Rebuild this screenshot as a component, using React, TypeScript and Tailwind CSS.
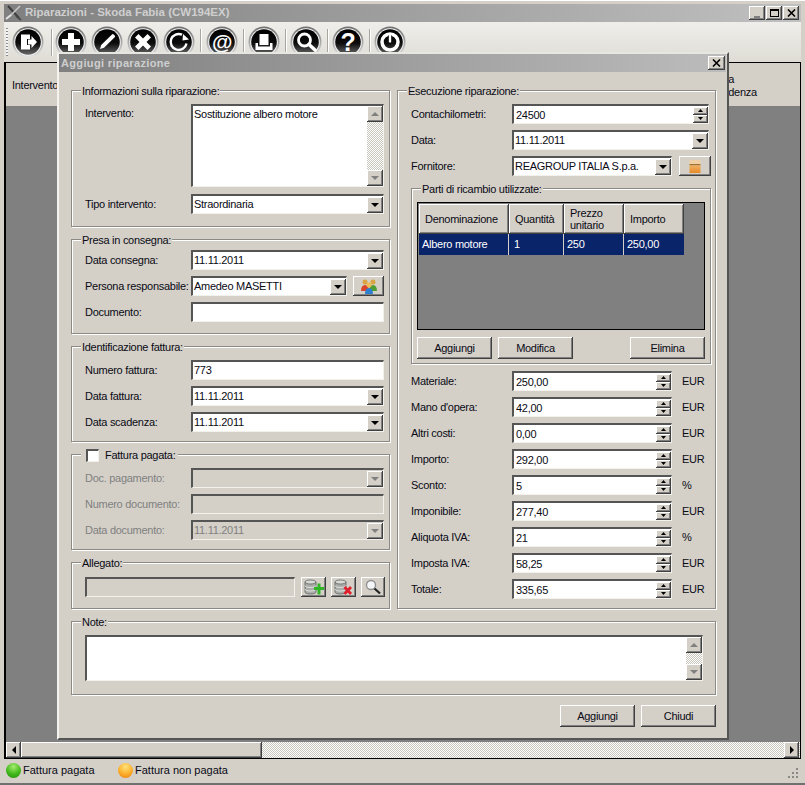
import React from 'react';

const face = 'bg-[#d4d0c8]';
const raised = 'bg-[#d4d0c8] shadow-[inset_-1px_-1px_0_#404040,inset_1px_1px_0_#fff,inset_-2px_-2px_0_#808080]';
const sunken = 'border-t-2 border-l-2 border-b border-r border-t-[#555555] border-l-[#555555] border-b-[#f2f1ec] border-r-[#f2f1ec]';
const dither = 'bg-[repeating-conic-gradient(#ffffff_0_25%,#c8c5bd_0_50%)] bg-[length:2px_2px]';

const Arrow = ({ dir = 'down', gray = false }: { dir?: 'up' | 'down' | 'left' | 'right'; gray?: boolean }) => {
    const points = { down: '0,0 8,0 4,4', up: '0,4 8,4 4,0', left: '4,0 4,8 0,4', right: '0,0 0,8 4,4' }[dir];
    const vertical = dir === 'up' || dir === 'down';
    return (
        <svg width={vertical ? 8 : 4} height={vertical ? 4 : 8} viewBox={vertical ? '0 0 8 4' : '0 0 4 8'}>
            <polygon points={points} fill={gray ? '#808080' : '#000'} />
        </svg>
    );
};

const SmallArrow = ({ up = false }: { up?: boolean }) => (
    <svg width="5" height="3" viewBox="0 0 5 3">
        <polygon points={up ? '0,3 5,3 2.5,0' : '0,0 5,0 2.5,3'} fill="#000" />
    </svg>
);

const GroupBox = ({ title, className, children }: { title: React.ReactNode; className: string; children: React.ReactNode }) => (
    <div className={`relative border border-[#8c8a84] shadow-[1px_1px_0_#fff,inset_1px_1px_0_#fff] ${className}`}>
        <div className="absolute -top-[6px] left-[9px] bg-[#d4d0c8] px-[1px] h-[13px] leading-[13px] flex items-center">{title}</div>
        {children}
    </div>
);

const Row = ({ label, width, disabled, children }: { label: string; width: string; disabled?: boolean; children: React.ReactNode }) => (
    <div className="flex items-center h-[20px]">
        <div className={`shrink-0 whitespace-nowrap ${width} ${disabled ? 'text-[#808080]' : ''}`}>{label}</div>
        {children}
    </div>
);

const TextBox = ({ value, className = '', disabled }: { value?: string; className?: string; disabled?: boolean }) => (
    <div className={`${sunken} h-[20px] flex items-center pl-[1px] ${disabled ? 'bg-[#d4d0c8] text-[#808080]' : 'bg-white'} ${className}`}>
        {value}
    </div>
);

const Combo = ({ value, className = 'flex-1', disabled }: { value?: string; className?: string; disabled?: boolean }) => (
    <div className={`${sunken} h-[20px] flex items-center justify-between ${disabled ? 'bg-[#d4d0c8] text-[#808080]' : 'bg-white'} ${className}`}>
        <span className="pl-[1px] whitespace-nowrap">{value}</span>
        <div className={`${raised} w-[16px] h-[16px] flex items-center justify-center`}>
            <Arrow gray={disabled} />
        </div>
    </div>
);

const Spin = ({ value, className = 'w-[160px]' }: { value: string; className?: string }) => (
    <div className={`${sunken} h-[20px] bg-white flex items-center justify-between ${className}`}>
        <span className="pl-[2px] pt-[1px]">{value}</span>
        <div className="flex flex-col w-[15px] h-[16px]">
            <div className={`${raised} flex-1 flex items-center justify-center`}><SmallArrow up /></div>
            <div className={`${raised} flex-1 flex items-center justify-center`}><SmallArrow /></div>
        </div>
    </div>
);

const VScroll = () => (
    <div className={`${dither} w-[16px] h-full flex flex-col justify-between shrink-0`}>
        <div className={`${raised} h-[16px] flex items-center justify-center`}><Arrow dir="up" gray /></div>
        <div className={`${raised} h-[16px] flex items-center justify-center`}><Arrow gray /></div>
    </div>
);

const PushButton = ({ children, className = '' }: { children: React.ReactNode; className?: string }) => (
    <div className={`${raised} flex items-center justify-center ${className}`}>{children}</div>
);

const ToolIcon = ({ children, id }: { children: React.ReactNode; id: string }) => (
    <svg width="32" height="32" viewBox="0 0 32 32" className="shrink-0">
        <defs>
            <linearGradient id={`ring${id}`} x1="0" y1="0" x2="0" y2="1">
                <stop offset="0" stopColor="#6f6f6f" />
                <stop offset="1" stopColor="#e2e2e2" />
            </linearGradient>
            <linearGradient id={`core${id}`} x1="0" y1="0" x2="0" y2="1">
                <stop offset="0" stopColor="#000" />
                <stop offset="0.55" stopColor="#0c0c0c" />
                <stop offset="1" stopColor="#6a6a6a" />
            </linearGradient>
        </defs>
        <circle cx="16" cy="16" r="15.5" fill={`url(#ring${id})`} />
        <circle cx="16" cy="16" r="13.8" fill="#f2f2f2" />
        <circle cx="16" cy="16" r="12.8" fill={`url(#core${id})`} />
        <g fill="#fff" stroke="none">{children}</g>
    </svg>
);

const Sep = ({ className }: { className: string }) => (
    <div className={`w-[1px] h-[27px] bg-[#a8a69f] shadow-[1px_0_0_#fff] shrink-0 ${className}`} />
);

const Toolbar = () => (
    <div className="h-[40px] flex items-center pl-[2px] bg-gradient-to-b from-[#efeeea] to-[#dedcd5] shrink-0">
        <div className="w-[2px] h-[28px] mr-[4px] bg-[repeating-linear-gradient(#8a8a8a_0_1px,#f5f5f5_1px_3px)] shrink-0" />
        <ToolIcon id="a">
            <path d="M9 8.5h9v4.5h-3v6h3v4.5H9z" />
            <path d="M16 13.5h3.5V10l5.5 6-5.5 6v-3.5H16z" />
        </ToolIcon>
        <Sep className="ml-[7px] mr-[3px]" />
        <div className="flex gap-[4px]">
            <ToolIcon id="b"><path d="M13 7h6v6h6v6h-6v6h-6v-6H7v-6h6z" /></ToolIcon>
            <ToolIcon id="c">
                <path d="M9 23l1.200-4 10.800-10.500a1.200 1.200 0 0 1 1.700 0l1 1a1.200 1.200 0 0 1 0 1.700L13 21.800z" />
            </ToolIcon>
            <ToolIcon id="d"><path d="M11.500 8l4.500 4.500L20.500 8l3.500 3.500-4.500 4.500 4.500 4.500-3.500 3.500-4.500-4.500-4.500 4.500L8 20.500l4.500-4.500L8 11.500z" /></ToolIcon>
            <ToolIcon id="e">
                <path d="M23.500 17.500a8 8 0 1 1-4.500-8.800" fill="none" stroke="#fff" strokeWidth="2.400" />
                <path d="M26 13.500l-6.500 1 .5-6.500z" />
            </ToolIcon>
        </div>
        <Sep className="ml-[5px] mr-[5px]" />
        <ToolIcon id="f">
            <text x="16" y="23" textAnchor="middle" fontSize="21" fontWeight="700" fontFamily="'Liberation Sans', sans-serif">@</text>
        </ToolIcon>
        <Sep className="ml-[5px] mr-[4px]" />
        <ToolIcon id="g">
            <path d="M11.500 8h9v11h-9z" />
            <path d="M7.500 17h2.500v3.500h12V17h2.500v7h-17z" />
        </ToolIcon>
        <Sep className="ml-[5px] mr-[4px]" />
        <ToolIcon id="h">
            <circle cx="14.500" cy="14" r="6" fill="none" stroke="#fff" strokeWidth="2.800" />
            <path d="M19 18.500l6 5.500" stroke="#fff" strokeWidth="3.500" strokeLinecap="round" />
        </ToolIcon>
        <Sep className="ml-[5px] mr-[4px]" />
        <ToolIcon id="i">
            <text x="16" y="25" textAnchor="middle" fontSize="25" fontWeight="700" fontFamily="'Liberation Sans', sans-serif">?</text>
        </ToolIcon>
        <Sep className="ml-[5px] mr-[4px]" />
        <ToolIcon id="j">
            <circle cx="16" cy="16" r="8" fill="none" stroke="#fff" strokeWidth="3.500" />
            <path d="M14 9.500h4v7.500h-4z" fill="#000" />
            <path d="M14.800 9h2.400v7.500h-2.400z" />
        </ToolIcon>
    </div>
);

const WinButton = ({ children, className = '' }: { children: React.ReactNode; className?: string }) => (
    <div className={`${raised} w-[16px] h-[14px] flex items-center justify-center ${className}`}>{children}</div>
);

const CloseGlyph = () => (
    <svg width="9" height="8" viewBox="0 0 9 8"><path d="M1 0.500l7 7M8 0.500l-7 7" stroke="#000" strokeWidth="1.600" /></svg>
);

const TitleBar = () => (
    <div className="h-[18px] flex items-center justify-between bg-gradient-to-r from-[#808080] to-[#c0c0c0] pr-[2px] shrink-0">
        <div className="flex items-center">
            <svg width="18" height="16" viewBox="0 0 18 16" className="ml-[1px] mr-[2px]">
                <path d="M3 1l11 12" stroke="#3c3c3c" strokeWidth="2" />
                <path d="M15 1L5 11" stroke="#c8c8c8" strokeWidth="1.600" />
                <path d="M1 14l5-4" stroke="#e2e2e2" strokeWidth="2" />
                <path d="M11 11l5 4" stroke="#4a4a4a" strokeWidth="2" />
            </svg>
            <span className="font-bold text-[#cfcfcf] text-[11.500px] tracking-normal">Riparazioni - Skoda Fabia (CW194EX)</span>
        </div>
        <div className="flex gap-[1px]">
            <WinButton><div className="w-[6px] h-[2px] bg-[#808080] mt-[7px]" /></WinButton>
            <WinButton><div className="w-[9px] h-[8px] border border-black border-t-2" /></WinButton>
            <WinButton><CloseGlyph /></WinButton>
        </div>
    </div>
);

const Ricambi = () => (
    <GroupBox title="Parti di ricambio utilizzate:" className="w-[300px] h-[176px] mt-[12px] px-[5px] pt-[13px]">
        <div className="h-[128px] bg-[#808080] border border-black pt-[1px] pl-[1px]">
            <div className="grid grid-cols-[90px_55px_60px_60px] w-fit">
                <div className={`${raised} h-[30px] flex items-center pl-[6px]`}>Denominazione</div>
                <div className={`${raised} h-[30px] flex items-center pl-[6px]`}>Quantità</div>
                <div className={`${raised} h-[30px] flex items-center pl-[6px] leading-[12px]`}>Prezzo<br />unitario</div>
                <div className={`${raised} h-[30px] flex items-center pl-[6px]`}>Importo</div>
                <div className="h-[21px] flex items-center pl-[3px] bg-[#0a246a] text-white border-r border-[#d4d0c8]">Albero motore</div>
                <div className="h-[21px] flex items-center pl-[5px] bg-[#0a246a] text-white border-r border-[#d4d0c8]">1</div>
                <div className="h-[21px] flex items-center pl-[3px] bg-[#0a246a] text-white border-r border-[#d4d0c8]">250</div>
                <div className="h-[21px] flex items-center pl-[3px] bg-[#0a246a] text-white">250,00</div>
            </div>
        </div>
        <div className="flex mt-[7px]">
            <PushButton className="w-[75px] h-[22px]">Aggiungi</PushButton>
            <PushButton className="w-[75px] h-[22px] ml-[6px]">Modifica</PushButton>
            <PushButton className="w-[75px] h-[22px] ml-auto">Elimina</PushButton>
        </div>
    </GroupBox>
);

const importi: [string, string, string][] = [
    ['Materiale:', '250,00', 'EUR'],
    ["Mano d'opera:", '42,00', 'EUR'],
    ['Altri costi:', '0,00', 'EUR'],
    ['Importo:', '292,00', 'EUR'],
    ['Sconto:', '5', '%'],
    ['Imponibile:', '277,40', 'EUR'],
    ['Aliquota IVA:', '21', '%'],
    ['Imposta IVA:', '58,25', 'EUR'],
    ['Totale:', '335,65', 'EUR'],
];

const DbStack = () => (
    <>
        <path d="M1 3v10c0 1.200 2.300 2 5.500 2s5.500-.8 5.500-2V3z" fill="#a9aca9" stroke="#5c5f5c" strokeWidth="0.800" />
        <ellipse cx="6.500" cy="3" rx="5.500" ry="2" fill="#d8dad8" stroke="#5c5f5c" strokeWidth="0.800" />
        <path d="M1 6.500c0 1.200 2.300 2 5.500 2s5.500-.8 5.500-2M1 10c0 1.200 2.300 2 5.500 2s5.500-.8 5.500-2" fill="none" stroke="#eef0ee" strokeWidth="0.800" />
    </>
);

const LeftColumn = () => (
    <div className="w-[319px] flex flex-col gap-[12px]">
        <GroupBox title="Informazioni sulla riparazione:" className="h-[137px] pl-[13px] pr-[5px] pt-[13px]">
            <div className="flex">
                <div className="w-[106px] shrink-0 pt-[1px]">Intervento:</div>
                <div className={`${sunken} h-[83px] flex-1 flex bg-white`}>
                    <div className="flex-1 pl-[1px]">Sostituzione albero motore</div>
                    <VScroll />
                </div>
            </div>
            <div className="mt-[7px]">
                <Row label="Tipo intervento:" width="w-[106px]"><Combo value="Straordinaria" /></Row>
            </div>
        </GroupBox>
        <GroupBox title="Presa in consegna:" className="h-[95px] pl-[13px] pr-[5px] pt-[10px]">
            <div className="flex flex-col gap-[6px]">
                <Row label="Data consegna:" width="w-[106px]"><Combo value="11.11.2011" /></Row>
                <Row label="Persona responsabile:" width="w-[106px]">
                    <Combo value="Amedeo MASETTI" className="w-[156px]" />
                    <PushButton className="w-[31px] h-[20px] ml-[6px]">
                        <svg width="18" height="16" viewBox="0 0 18 16">
                            <circle cx="5" cy="4" r="2.500" fill="#d9a441" />
                            <circle cx="13" cy="4" r="2.500" fill="#d9a441" />
                            <path d="M1 13c0-4 1.500-6 4-6s4 2 4 6z" fill="#d8452c" />
                            <path d="M9 13c0-4 1.500-6 4-6s4 2 4 6z" fill="#4f9e33" />
                            <circle cx="9" cy="7" r="2.500" fill="#efbb55" />
                            <path d="M5 16c0-4 1.500-6 4-6s4 2 4 6z" fill="#2f7fd0" />
                        </svg>
                    </PushButton>
                </Row>
                <Row label="Documento:" width="w-[106px]"><TextBox className="flex-1" /></Row>
            </div>
        </GroupBox>
        <GroupBox title="Identificazione fattura:" className="h-[96px] pl-[13px] pr-[5px] pt-[13px]">
            <div className="flex flex-col gap-[6px]">
                <Row label="Numero fattura:" width="w-[106px]"><TextBox value="773" className="flex-1" /></Row>
                <Row label="Data fattura:" width="w-[106px]"><Combo value="11.11.2011" /></Row>
                <Row label="Data scadenza:" width="w-[106px]"><Combo value="11.11.2011" /></Row>
            </div>
        </GroupBox>
        <GroupBox
            title={
                <span className="flex items-center pl-[4px] pr-[2px]">
                    <span className={`${sunken} w-[13px] h-[13px] bg-white mr-[6px]`} />
                    Fattura pagata:
                </span>
            }
            className="h-[96px] pl-[13px] pr-[5px] pt-[13px]"
        >
            <div className="flex flex-col gap-[6px]">
                <Row label="Doc. pagamento:" width="w-[106px]" disabled><Combo disabled /></Row>
                <Row label="Numero documento:" width="w-[106px]" disabled><TextBox disabled className="flex-1" /></Row>
                <Row label="Data documento:" width="w-[106px]" disabled><Combo value="11.11.2011" disabled /></Row>
            </div>
        </GroupBox>
        <GroupBox title="Allegato:" className="h-[47px] pl-[13px] pr-[4px] pt-[14px]">
            <div className="flex items-center">
                <TextBox disabled className="w-[210px]" />
                <PushButton className="w-[25px] h-[20px] ml-[6px]">
                    <svg width="20" height="17" viewBox="0 0 20 17">
                        <DbStack />
                        <path d="M10 8h3.500V4.500h3V8H20v3h-3.500v4.500h-3V11H10z" fill="#2fb526" />
                    </svg>
                </PushButton>
                <PushButton className="w-[25px] h-[20px] ml-[5px]">
                    <svg width="20" height="17" viewBox="0 0 20 17">
                        <DbStack />
                        <path d="M10.500 8l6.500 7M17 8l-6.500 7" stroke="#e01f2d" strokeWidth="2.800" />
                    </svg>
                </PushButton>
                <PushButton className="w-[24px] h-[20px] ml-[5px]">
                    <svg width="18" height="16" viewBox="0 0 18 16">
                        <circle cx="7" cy="6" r="4.500" fill="#f4f6f8" stroke="#8e8e8e" strokeWidth="1.300" />
                        <path d="M10.500 9.500l5.500 5" stroke="#222" strokeWidth="2.200" />
                    </svg>
                </PushButton>
            </div>
        </GroupBox>
    </div>
);

const RightColumn = () => (
    <GroupBox title="Esecuzione riparazione:" className="w-[319px] h-[519px] pl-[13px] pt-[13px]">
        <div className="flex flex-col gap-[6px]">
            <Row label="Contachilometri:" width="w-[101px]"><Spin value="24500" className="w-[197px]" /></Row>
            <Row label="Data:" width="w-[101px]"><Combo value="11.11.2011" className="w-[197px]" /></Row>
            <Row label="Fornitore:" width="w-[101px]">
                <Combo value="REAGROUP ITALIA S.p.a." className="w-[160px]" />
                <PushButton className="w-[32px] h-[20px] ml-[7px]">
                    <svg width="12" height="15" viewBox="0 0 12 15">
                        <defs>
                            <linearGradient id="cassetto" x1="0" y1="0" x2="0" y2="1">
                                <stop offset="0" stopColor="#f3b060" />
                                <stop offset="1" stopColor="#e58a2a" />
                            </linearGradient>
                        </defs>
                        <rect x="0.500" y="1" width="11" height="4" fill="#efd0a6" />
                        <rect x="0.500" y="5" width="11" height="1.500" fill="#a0712f" />
                        <rect x="0.500" y="6.500" width="11" height="7.500" fill="url(#cassetto)" />
                    </svg>
                </PushButton>
            </Row>
        </div>
        <Ricambi />
        <div className="flex flex-col gap-[6px] mt-[7px]">
            {importi.map(([label, value, unit]) => (
                <Row key={label} label={label} width="w-[101px]">
                    <Spin value={value} />
                    <span className="ml-[10px]">{unit}</span>
                </Row>
            ))}
        </div>
    </GroupBox>
);

const Dialog = () => (
    <div className={`absolute left-[57px] top-[51px] w-[672px] h-[688px] ${face} flex flex-col border-t-2 border-l-2 border-b-2 border-r-2 border-t-[#e8e6e0] border-l-[#f4f3ef] border-b-[#555555] border-r-[#555555]`}>
        <div className="h-[18px] flex items-center justify-between pl-[2px] pr-[1px] bg-gradient-to-r from-[#808080] to-[#bcbcbc] shrink-0 mr-[1px]">
            <span className="font-bold text-[#cfcfcf] text-[11px] tracking-[0.35px]">Aggiugi riparazione</span>
            <WinButton className="w-[17px]"><CloseGlyph /></WinButton>
        </div>
        <div className="pl-[12px] pr-[11px] pt-[18px] flex-1 flex flex-col">
            <div className="flex gap-[7px]">
                <LeftColumn />
                <RightColumn />
            </div>
            <GroupBox title="Note:" className="h-[74px] mt-[12px] pl-[13px] pr-[12px] pt-[13px]">
                <div className={`${sunken} h-[46px] flex bg-white`}>
                    <div className="flex-1" />
                    <VScroll />
                </div>
            </GroupBox>
            <div className="flex justify-end gap-[6px] mt-[10px]">
                <PushButton className="w-[75px] h-[22px]">Aggiungi</PushButton>
                <PushButton className="w-[75px] h-[22px]">Chiudi</PushButton>
            </div>
        </div>
    </div>
);

const Grid = () => (
    <div className="flex-1 flex flex-col border-2 border-black border-r border-b border-t-[1px] min-h-0">
        <div className={`${face} h-[43px] flex items-center pt-[2px] shrink-0`}>
            <span className="pl-[6px]">Intervento</span>
            <div className="ml-auto w-[88px] leading-[13px]">Data<br />scadenza</div>
        </div>
        <div className="flex-1 bg-[#808080]" />
        <div className={`h-[16px] flex ${dither} pr-[1px] shrink-0`}>
            <div className={`${raised} w-[15px] flex items-center justify-center`}><Arrow dir="left" /></div>
            <div className={`${raised} w-[241px]`} />
            <div className={`${raised} w-[15px] ml-auto flex items-center justify-center`}><Arrow dir="right" /></div>
        </div>
    </div>
);

const StatusBar = () => (
    <div className={`h-[22px] ${face} flex items-center pl-[2px] shrink-0`}>
        <span className="w-[15px] h-[15px] rounded-full bg-[radial-gradient(circle_at_50%_25%,#a4ec70,#42b81a_55%,#1f8a0a)]" />
        <span className="ml-[2px] pt-[1px] w-[95px] text-[11px] tracking-normal">Fattura pagata</span>
        <span className="w-[15px] h-[15px] rounded-full bg-[radial-gradient(circle_at_50%_25%,#ffe27a,#fbae2a_55%,#ea7a10)]" />
        <span className="ml-[2px] pt-[1px] text-[11px] tracking-normal">Fattura non pagata</span>
        <svg width="12" height="12" viewBox="0 0 12 12" className="ml-auto mr-[2px] mt-[6px]">
            <path d="M9 1h2v2H9zM5 5h2v2H5zM9 5h2v2H9zM1 9h2v2H1zM5 9h2v2H5zM9 9h2v2H9z" fill="#8a8a84" />
        </svg>
    </div>
);

export default function App() {
    return (
        <div className={`relative w-[805px] h-[785px] overflow-hidden ${face} text-[11px] tracking-[-0.28px] text-[#0a0a14] font-['Liberation_Sans',Arial,sans-serif] border-t border-white border-b-2 border-b-[#707070]`}>
            <div className="flex flex-col h-full px-[4px] pt-[3px] pb-[2px]">
                <TitleBar />
                <Toolbar />
                <Grid />
                <StatusBar />
            </div>
            <Dialog />
        </div>
    );
}
